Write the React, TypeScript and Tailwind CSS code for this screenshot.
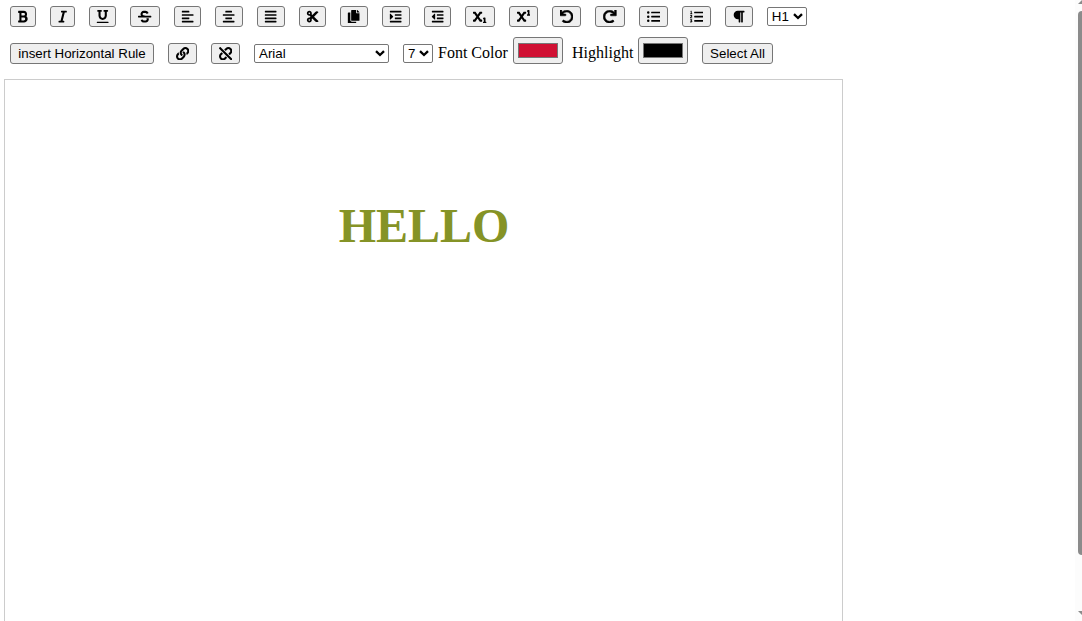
import { ReactNode } from 'react';
import {
  FaBold, FaItalic, FaUnderline, FaStrikethrough, FaAlignLeft, FaAlignCenter, FaAlignJustify,
  FaCut, FaCopy, FaIndent, FaOutdent, FaSubscript, FaSuperscript, FaUndo, FaRedo,
  FaListUl, FaListOl, FaParagraph, FaLink, FaUnlink,
} from 'react-icons/fa';

const tools = [
  { icon: FaBold, w: 'w-[26px]' },
  { icon: FaItalic, w: 'w-[24.67px]' },
  { icon: FaUnderline, w: 'w-[27.67px]' },
  { icon: FaStrikethrough, w: 'w-[29.33px]' },
  { icon: FaAlignLeft, w: 'w-[27.67px]' },
  { icon: FaAlignCenter, w: 'w-[27.67px]' },
  { icon: FaAlignJustify, w: 'w-[27.67px]' },
  { icon: FaCut, w: 'w-[27.67px]' },
  { icon: FaCopy, w: 'w-[27.67px]' },
  { icon: FaIndent, w: 'w-[27.67px]' },
  { icon: FaOutdent, w: 'w-[27.67px]' },
  { icon: FaSubscript, w: 'w-[29.33px]' },
  { icon: FaSuperscript, w: 'w-[29.33px]' },
  { icon: FaUndo, w: 'w-[29.33px] [&>svg]:stroke-black [&>svg]:stroke-[20px]' },
  { icon: FaRedo, w: 'w-[29.33px] [&>svg]:stroke-black [&>svg]:stroke-[20px]' },
  { icon: FaListUl, w: 'w-[29.33px]' },
  { icon: FaListOl, w: 'w-[29.33px]' },
  { icon: FaParagraph, w: 'w-[27.67px]' },
];

function Button({ className, children }: { className: string; children: ReactNode }) {
  return (
    <button
      className={`flex h-[21px] shrink-0 items-center justify-center whitespace-nowrap rounded-[3px] border border-[#767676] bg-[#efefef] text-[13.333px] leading-none ${className}`}
    >
      {children}
    </button>
  );
}

function Select({ className, label }: { className: string; label: string }) {
  return (
    <button
      className={`flex h-[19px] shrink-0 items-center justify-between rounded-[2px] border border-[#767676] bg-white pl-1 pr-[3px] text-[13.333px] leading-none ${className}`}
    >
      <span>{label}</span>
      <svg width="10" height="7" viewBox="0 0 10 7" fill="none" stroke="#000" strokeWidth="2.3">
        <path d="M1 1.1 5 5 9 1.1" />
      </svg>
    </button>
  );
}

function Swatch({ color }: { color: string }) {
  return (
    <button className="flex h-[27px] w-[50px] shrink-0 items-center justify-center rounded-[3px] border border-[#767676] bg-[#efefef]">
      <span className={`h-[15px] w-10 border border-[#777] ${color}`} />
    </button>
  );
}

export default function App() {
  return (
    <div className="flex h-[621px] w-[1082px] justify-between overflow-hidden bg-white font-['Liberation_Sans',sans-serif] text-black">
      <div className="flex w-[843px] flex-col pl-1">
        <div className="flex h-8 shrink-0 items-start gap-[14px] pl-1.5 pt-1.5">
          {tools.map(({ icon: Icon, w }, i) => (
            <Button key={i} className={w}>
              <Icon size={13.333} className="shrink-0" />
            </Button>
          ))}
          <Select className="mt-px w-10" label="H1" />
        </div>
        <div className="flex h-[47px] shrink-0 items-start pl-1.5 pt-[5px]">
          <Button className="mt-1.5 w-36">insert Horizontal Rule</Button>
          <Button className="ml-[14px] mt-1.5 w-[29px]"><FaLink size={13.333} /></Button>
          <Button className="ml-[14px] mt-1.5 w-[29px]"><FaUnlink size={13.333} /></Button>
          <Select className="ml-[14px] mt-[7px] w-[135px]" label="Arial" />
          <Select className="ml-[14px] mt-[7px] w-[30px]" label="7" />
          <span className="ml-[5px] mt-[7px] w-[75px] whitespace-nowrap font-['Liberation_Serif',serif] text-base leading-[18px]">Font Color</span>
          <Swatch color="bg-[#d01033]" />
          <span className="ml-[9px] mt-[7px] w-[66px] whitespace-nowrap font-['Liberation_Serif',serif] text-base leading-[18px]">Highlight</span>
          <Swatch color="bg-black" />
          <Button className="ml-[14px] mt-1.5 w-[71px]">Select All</Button>
        </div>
        <main className="flex-1 border border-b-0 border-[#ccc] pl-px pt-[118px] text-center">
          <h1 className="font-['Liberation_Serif',serif] text-[48px] font-bold leading-[55px] text-[#859326]">HELLO</h1>
        </main>
      </div>
      <aside className="flex w-[7px] flex-col items-end justify-between overflow-hidden bg-[#fcfcfc]">
        <svg width="4" height="4" viewBox="0 0 4 4"><path d="M0 4 4 0V4Z" fill="#8b8b8b" /></svg>
        <div className="mt-[7px] h-[544px] w-1 shrink-0 rounded-l-[4px] bg-[#8b8b8b]" />
        <div className="flex-1" />
        <svg width="4" height="4" viewBox="0 0 4 4" className="mb-1.5"><path d="M0 0H4V4Z" fill="#8b8b8b" /></svg>
      </aside>
    </div>
  );
}
